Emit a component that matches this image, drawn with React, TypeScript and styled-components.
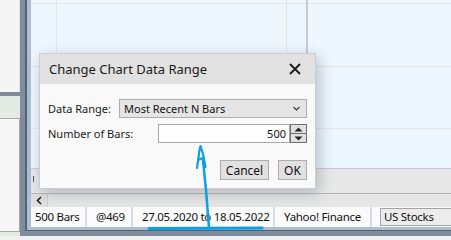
import styled, { createGlobalStyle } from 'styled-components'

const Global = createGlobalStyle`
  html, body { margin: 0; padding: 0; background: #f0f0f0; }
  body { font-family: "Noto Sans", "Open Sans", sans-serif; color: #111; }
`

const Screen = styled.div`
  position: relative;
  width: 451px;
  height: 240px;
  overflow: hidden;
  display: flex;
  background: #f0f0f0;
`

const SidePanel = styled.div`
  width: 24px;
  height: 236px;
  display: flex;
  flex-direction: column;
`

const SideTop = styled.div`
  height: 92px;
  display: flex;
  background: #e3ebe3;
`

const SideTopFill = styled.div`
  width: 19px;
  background: #f5f5f5;
  border-right: 1px solid #dfe6df;
`

const SideBand = styled.div`
  height: 4px;
  background: #7d8b9b;
`

const SideBottom = styled.div`
  flex: 1;
  background: #e3ebe3;
  padding-top: 22px;
  padding-bottom: 4px;
  display: flex;
`

const SideBox = styled.div`
  width: 19px;
  background: #f7f7f7;
  border-top: 1px solid #a8a8a8;
  border-right: 1px solid #a8a8a8;
  border-bottom: 1px solid #a8a8a8;
`

const Window = styled.div`
  flex: 1;
  height: 231px;
  border-left: 5px solid #7f8d9d;
  border-bottom: 5px solid #7f8d9d;
  display: flex;
`

const WindowInner = styled.div`
  flex: 1;
  border-left: 2px solid #56616e;
  border-bottom: 1px solid #56616e;
  padding-left: 4px;
  padding-bottom: 3px;
  background: #aabed8;
  display: flex;
  flex-direction: column;
`

const Chart = styled.div`
  position: relative;
  height: 169px;
  background: #eef6fe;
  border-bottom: 1px solid #c2cad8;
  overflow: hidden;
`

const GridV = styled.div<{ $x: number; $c?: string; $w?: number }>`
  position: absolute;
  top: 0;
  bottom: 0;
  left: ${p => p.$x}px;
  width: ${p => p.$w ?? 1}px;
  background: ${p => p.$c ?? '#e3e6ea'};
`

const GridH = styled.div<{ $y: number }>`
  position: absolute;
  left: 0;
  right: 0;
  top: ${p => p.$y}px;
  height: 1px;
  background: #e6e6e6;
`

const Gutter = styled.div`
  height: 24px;
  background: #e8e8e8;
  position: relative;
`

const Tick = styled.div`
  position: absolute;
  left: 2px;
  top: 7px;
  width: 1px;
  height: 6px;
  background: #555;
`

const ScrollRow = styled.div`
  height: 13px;
  display: flex;
  background: #e6e6e6;
  border-top: 1px solid #b8b8b8;
`

const ScrollButton = styled.div`
  width: 16px;
  display: flex;
  align-items: center;
  justify-content: center;
  background: #e0e0e0;
  border-right: 1px solid #cfcfcf;
`

const StatusBar = styled.div`
  height: 20px;
  display: flex;
  align-items: center;
  background: #fbfbfb;
  font-size: 11.5px;
  letter-spacing: -0.3px;
  white-space: nowrap;
`

const StatusItem = styled.div<{ $w: number }>`
  width: ${p => p.$w}px;
  flex: none;
  padding-left: 4px;
  height: 20px;
  line-height: 20px;
  border-right: 2px solid #d3dde9;
  box-sizing: border-box;
  margin-right: 5px;
`

const StatusBox = styled.div`
  flex: none;
  width: 90px;
  height: 16px;
  line-height: 16px;
  padding-left: 3px;
  margin-left: 3px;
  background: #ececec;
  border: 1px solid #a4a4a4;
`

const Dialog = styled.div`
  position: absolute;
  left: 39px;
  top: 53px;
  width: 277px;
  height: 136px;
  background: #f9f9f9;
  border: 1px solid #cdcdcd;
  box-sizing: border-box;
  box-shadow: 3px 4px 14px rgba(40, 50, 70, 0.28);
  display: flex;
  flex-direction: column;
`

const TitleBar = styled.div`
  height: 30px;
  background: #e1e1e1;
  display: flex;
  align-items: center;
  justify-content: space-between;
  padding: 0 14px 0 9px;
  font-size: 13px;
  color: #1a1a1a;
`

const Body = styled.div`
  flex: 1;
  padding: 15px 8px 0 8px;
  font-size: 11px;
  display: flex;
  flex-direction: column;
`

const Row = styled.div<{ $label: number }>`
  display: grid;
  grid-template-columns: ${p => p.$label}px 1fr;
  align-items: center;
  height: 19px;
  margin-bottom: 6px;
`

const Label = styled.div`
  color: #1a1a1a;
`

const Select = styled.div`
  height: 19px;
  box-sizing: border-box;
  border: 1px solid #adadad;
  background: #e5e5e5;
  display: flex;
  align-items: center;
  justify-content: space-between;
  padding: 0 6px 0 4px;
`

const NumberField = styled.div`
  display: flex;
  height: 19px;
`

const Input = styled.div`
  flex: 1;
  box-sizing: border-box;
  border: 1px solid #a8a8a8;
  background: #fdfdfd;
  text-align: right;
  padding-right: 3px;
  line-height: 17px;
`

const Spinner = styled.div`
  width: 17px;
  box-sizing: border-box;
  border: 1px solid #6f6f6f;
  background: #e1e1e1;
  display: flex;
  flex-direction: column;
`

const SpinHalf = styled.div<{ $top?: boolean }>`
  flex: 1;
  display: flex;
  align-items: center;
  justify-content: center;
  border-bottom: ${p => (p.$top ? '1px solid #6f6f6f' : 'none')};
`

const Buttons = styled.div`
  display: flex;
  justify-content: flex-end;
  gap: 9px;
  margin-top: 11px;
`

const Button = styled.div<{ $w: number }>`
  width: ${p => p.$w}px;
  height: 20px;
  box-sizing: border-box;
  border: 1px solid #adadad;
  background: #e1e1e1;
  display: flex;
  align-items: center;
  justify-content: center;
  font-size: 12px;
`

const Annotation = styled.svg`
  position: absolute;
  left: 0;
  top: 0;
  pointer-events: none;
`

export default function App() {
  return (
    <>
      <Global />
      <Screen>
        <SidePanel>
          <SideTop>
            <SideTopFill />
          </SideTop>
          <SideBand />
          <SideBottom>
            <SideBox />
          </SideBottom>
        </SidePanel>

        <Window>
          <WindowInner>
            <Chart>
              <GridH $y={3} />
              <GridH $y={66} />
              <GridH $y={128} />
              <GridV $x={25} />
              <GridV $x={255} $c="#e6e2de" />
              <GridV $x={275} $c="#c9cbcf" $w={2} />
            </Chart>
            <Gutter>
              <Tick />
            </Gutter>
            <ScrollRow>
              <ScrollButton>
                <svg width="6" height="9" viewBox="0 0 6 9">
                  <path d="M5 1 L1.5 4.5 L5 8" fill="none" stroke="#222" strokeWidth="1.6" />
                </svg>
              </ScrollButton>
            </ScrollRow>
            <StatusBar>
              <StatusItem $w={56}>500 Bars</StatusItem>
              <StatusItem $w={41}>@469</StatusItem>
              <StatusItem $w={137}>27.05.2020 to 18.05.2022</StatusItem>
              <StatusItem $w={92}>Yahoo! Finance</StatusItem>
              <StatusBox>US Stocks</StatusBox>
            </StatusBar>
          </WindowInner>
        </Window>

        <Dialog>
          <TitleBar>
            <span>Change Chart Data Range</span>
            <svg width="12" height="12" viewBox="0 0 12 12">
              <path d="M1 1 L11 11 M11 1 L1 11" stroke="#1a1a1a" strokeWidth="1.8" />
            </svg>
          </TitleBar>
          <Body>
            <Row $label={71}>
              <Label>Data Range:</Label>
              <Select>
                <span>Most Recent N Bars</span>
                <svg width="7" height="5" viewBox="0 0 7 5">
                  <path d="M0.5 1 L3.5 4 L6.5 1" fill="none" stroke="#333" strokeWidth="1.1" />
                </svg>
              </Select>
            </Row>
            <Row $label={110}>
              <Label>Number of Bars:</Label>
              <NumberField>
                <Input>500</Input>
                <Spinner>
                  <SpinHalf $top>
                    <svg width="9" height="5" viewBox="0 0 9 5">
                      <path d="M0.5 4.5 L4.5 0.5 L8.5 4.5 Z" fill="#222" />
                    </svg>
                  </SpinHalf>
                  <SpinHalf>
                    <svg width="9" height="5" viewBox="0 0 9 5">
                      <path d="M0.5 0.5 L4.5 4.5 L8.5 0.5 Z" fill="#222" />
                    </svg>
                  </SpinHalf>
                </Spinner>
              </NumberField>
            </Row>
            <Buttons>
              <Button $w={49}>Cancel</Button>
              <Button $w={29}>OK</Button>
            </Buttons>
          </Body>
        </Dialog>

        <Annotation width="451" height="240" viewBox="0 0 451 240">
          <g fill="none" stroke="#0c9fe2" strokeLinecap="round" strokeLinejoin="round">
            <path d="M149 228.5 L262 228" strokeWidth="3" />
            <path d="M209 228 L206 190 L203 160" strokeWidth="2.5" />
            <path d="M197 168 L199.5 150 L200.5 146 L203 154 L205.5 167" strokeWidth="2.2" />
            <path d="M198 160 L203 158" strokeWidth="2" />
          </g>
        </Annotation>
      </Screen>
    </>
  )
}
